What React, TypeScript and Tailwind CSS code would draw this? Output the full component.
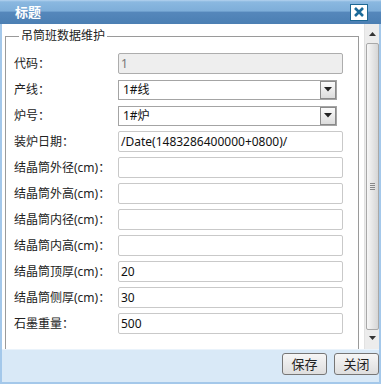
type Row = { label: string; value: string; kind: 'disabled' | 'select' | 'text' }

const rows: Row[] = [
  { label: '代码：', value: '1', kind: 'disabled' },
  { label: '产线：', value: '1#线', kind: 'select' },
  { label: '炉号：', value: '1#炉', kind: 'select' },
  { label: '装炉日期：', value: '/Date(1483286400000+0800)/', kind: 'text' },
  { label: '结晶筒外径(cm)：', value: '', kind: 'text' },
  { label: '结晶筒外高(cm)：', value: '', kind: 'text' },
  { label: '结晶筒内径(cm)：', value: '', kind: 'text' },
  { label: '结晶筒内高(cm)：', value: '', kind: 'text' },
  { label: '结晶筒顶厚(cm)：', value: '20', kind: 'text' },
  { label: '结晶筒侧厚(cm)：', value: '30', kind: 'text' },
  { label: '石墨重量：', value: '500', kind: 'text' },
]

const font = "font-['Noto_Sans','Noto_Sans_CJK_SC',sans-serif]"

export default function App() {
  return (
    <div className={`${font} h-[384px] w-[381px] flex flex-col bg-[#a4c8ea] overflow-hidden`}>
      <TitleBar />
      <div className="h-[325px] mx-[2px] flex bg-white">
        <div className="flex-1 overflow-hidden">
          <fieldset className="mt-[4px] ml-[3px] mr-[5px] border border-[#9a9a9a] pl-[8px] pt-[9px] pb-[30px]">
            <legend className="ml-[5px] px-[2px] text-[12px] leading-4 text-[#222]">吊筒班数据维护</legend>
            <div className="flex flex-col gap-[5px]">
              {rows.map((row) => (
                <FormRow key={row.label} row={row} />
              ))}
            </div>
          </fieldset>
        </div>
        <Scrollbar />
      </div>
      <div className="h-[34px] mx-[2px] mb-[2px] flex items-start justify-end gap-[7px] pt-[1px] bg-[#d9e9f7] border-t border-[#eaf3fb]">
        <button type="button" className="mt-[2px] h-[22px] w-[45px] rounded-[3px] border border-[#767676] bg-[linear-gradient(#f6f6f6,#dedede)] text-[13px] leading-none text-[#222]">
          保存
        </button>
        <button type="button" className="mt-[2px] h-[22px] w-[45px] rounded-[3px] border border-[#767676] bg-[linear-gradient(#f6f6f6,#dedede)] text-[13px] leading-none text-[#222]">
          关闭
        </button>
      </div>
    </div>
  )
}

function TitleBar() {
  return (
    <div className="h-[25px] flex items-center justify-between pl-[15px] pr-[13px] bg-[linear-gradient(#b5d3ef_0%,#8ab8e0_8%,#7eaed9_45%,#5587bb_52%,#4b7fb3_100%)]">
      <span className="text-[13px] font-bold leading-none text-white">标题</span>
      <div className="h-[17px] w-[18px] flex items-center justify-center bg-white border border-[#1e6895]">
        <svg width="12" height="12" viewBox="0 0 12 12">
          <path d="M2 2 L10 10 M10 2 L2 10" stroke="#1b6a99" strokeWidth="2.6" />
        </svg>
      </div>
    </div>
  )
}

function FormRow({ row }: { row: Row }) {
  return (
    <div className="flex items-center h-[21px]">
      <div className="w-[104px] text-[12px] leading-4 text-[#222] whitespace-nowrap">{row.label}</div>
      {row.kind === 'disabled' && (
        <div className="h-[21px] w-[225px] flex items-center px-[2px] rounded-[2px] border border-[#adadad] bg-[#eeeeee] text-[12px] text-[#777]">
          {row.value}
        </div>
      )}
      {row.kind === 'select' && (
        <div className="h-[20px] w-[219px] flex items-center border border-[#a4a4a4] bg-white">
          <span className="flex-1 pl-[4px] text-[12px] text-[#111]">{row.value}</span>
          <span className="h-[18px] w-[16px] flex items-center justify-center border border-[#8a8a8a] bg-[linear-gradient(#fbfbfb,#dcdcdc)]">
            <svg width="8" height="5" viewBox="0 0 8 5">
              <path d="M0 0 H8 L4 4.5 Z" fill="#222" />
            </svg>
          </span>
        </div>
      )}
      {row.kind === 'text' && (
        <div className="h-[21px] w-[225px] flex items-center px-[2px] rounded-[2px] border border-[#c9c9c9] bg-white text-[12px] text-[#111]">
          {row.value}
        </div>
      )}
    </div>
  )
}

function Scrollbar() {
  return (
    <div className="w-[15px] flex flex-col items-center bg-[#ececec] border-l border-[#e2e2e2]">
      <div className="h-[16px] w-full flex items-center justify-center pt-[4px]">
        <svg width="7" height="4" viewBox="0 0 7 4">
          <path d="M0 4 H7 L3.5 0 Z" fill="#333" />
        </svg>
      </div>
      <div className="mt-[3px] h-[287px] w-[13px] flex items-center justify-center rounded-[2px] border border-[#a8a8a8] bg-[linear-gradient(90deg,#f7f7f7,#e6e6e6_50%,#d6d6d6)]">
        <div className="flex flex-col gap-[1px]">
          <div className="h-px w-[5px] bg-[#888]" />
          <div className="h-px w-[5px] bg-[#888]" />
          <div className="h-px w-[5px] bg-[#888]" />
          <div className="h-px w-[5px] bg-[#888]" />
        </div>
      </div>
      <div className="h-[16px] w-full flex items-center justify-center">
        <svg width="7" height="4" viewBox="0 0 7 4">
          <path d="M0 0 H7 L3.5 4 Z" fill="#333" />
        </svg>
      </div>
    </div>
  )
}
